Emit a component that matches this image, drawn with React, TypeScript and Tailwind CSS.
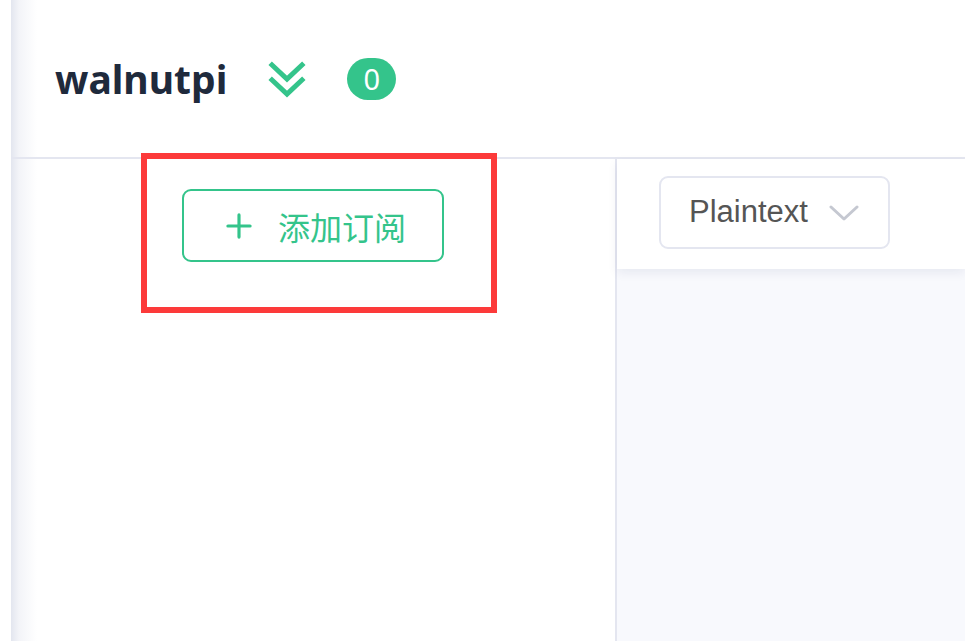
import { Plus } from "lucide-react";

const GREEN = "#34c48b";

function DoubleChevron() {
  return (
    <svg width="38" height="38" viewBox="0 0 38 38" fill="none" stroke={GREEN} strokeWidth="5" strokeLinecap="square">
      <path d="M4 4 L19 18 L34 4" />
      <path d="M4 19 L19 33 L34 19" />
    </svg>
  );
}

function SelectChevron() {
  return (
    <svg width="30" height="18" viewBox="0 0 30 18" fill="none" stroke="#c5c8d1" strokeWidth="3" strokeLinecap="round" strokeLinejoin="round">
      <path d="M2 3 L15 15 L28 3" />
    </svg>
  );
}

export default function App() {
  return (
    <div className="relative flex h-[641px] w-[965px] overflow-hidden bg-white">
      <div className="w-[11px] shrink-0" />
      <div className="flex min-w-0 flex-1 flex-col bg-[linear-gradient(to_right,#e3e6ef_0px,#f3f4f8_8px,#ffffff_26px)]">
        <header className="flex h-[159px] shrink-0 items-center border-b-2 border-[#e4e6f0] pl-[44px]">
          <h1
            className="text-[39px] font-bold leading-none text-[#1f2a3c]"
            style={{ fontFamily: '"Noto Sans", "Open Sans", sans-serif' }}
          >
            walnutpi
          </h1>
          <div className="ml-[41px] mt-[2px]">
            <DoubleChevron />
          </div>
          <span
            className="ml-[41px] flex h-[42px] w-[49px] items-center justify-center rounded-full text-[29px] text-white"
            style={{ backgroundColor: GREEN, fontFamily: '"Noto Sans", sans-serif' }}
          >
            0
          </span>
        </header>
        <div className="flex min-h-0 flex-1">
          <aside className="flex w-[606px] shrink-0 justify-center border-r-2 border-[#e4e6f0] pt-[30px]">
            <button
              className="flex h-[73px] w-[262px] items-center justify-center gap-[20px] rounded-[9px] border-2 text-[32px]"
              style={{ borderColor: GREEN, color: GREEN, fontFamily: '"Noto Sans CJK SC", "Noto Sans", sans-serif' }}
            >
              <Plus size={38} strokeWidth={2} />
              <span>添加订阅</span>
            </button>
          </aside>
          <section className="flex min-w-0 flex-1 flex-col bg-[#f8f9fd]">
            <div className="relative z-10 flex h-[110px] shrink-0 items-start bg-white pl-[42px] pt-[17px] shadow-[0_4px_10px_rgba(20,30,80,0.07)]">
              <div
                className="flex h-[73px] w-[231px] items-center gap-[21px] rounded-[9px] border-2 border-[#e4e6f0] pl-[28px]"
                style={{ fontFamily: '"Liberation Sans", Arial, sans-serif' }}
              >
                <span className="text-[31px] text-[#555]">Plaintext</span>
                <SelectChevron />
              </div>
            </div>
            <div className="flex-1" />
          </section>
        </div>
      </div>
      <div className="pointer-events-none absolute left-[141px] top-[153px] h-[160px] w-[356px] border-[6px] border-[#fc3a3a]" />
    </div>
  );
}
